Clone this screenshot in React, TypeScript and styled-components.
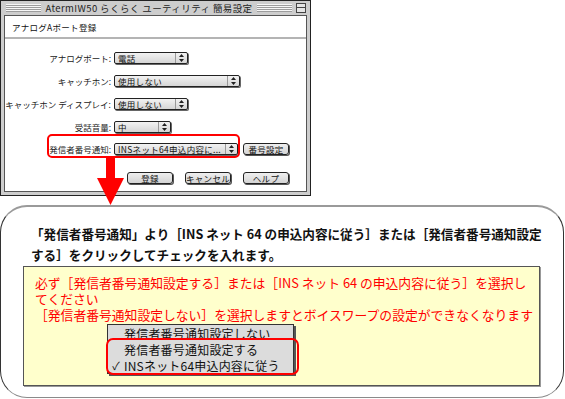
import styled, { createGlobalStyle } from "styled-components";

const GlobalStyle = createGlobalStyle`
  html, body {
    margin: 0;
    padding: 0;
    background: #fff;
  }

  body {
    width: 565px;
    height: 399px;
    overflow: hidden;
    font-family: "Noto Sans CJK JP", sans-serif;
    color: #111;
  }
`;

const Page = styled.div`
  width: 565px;
  height: 399px;
  display: flex;
  flex-direction: column;
`;

const Top = styled.div`
  position: relative;
  height: 205px;
`;

const Window = styled.div`
  width: 311px;
  height: 196px;
  box-sizing: border-box;
  border: 1px solid #222;
  background: #cdcdcd;
  padding: 0 3px 3px 3px;
  display: flex;
  flex-direction: column;
`;

const TitleBar = styled.div`
  height: 14px;
  display: flex;
  align-items: center;
  gap: 4px;
  padding: 0 1px 0 2px;
`;

const Stripes = styled.div`
  flex: 1;
  height: 8px;
  background: repeating-linear-gradient(
    to bottom,
    #f6f6f6 0 1px,
    #9c9c9c 1px 2px
  );
`;

const Title = styled.span`
  font-size: 9.5px;
  letter-spacing: 0.4px;
  white-space: nowrap;
  color: #222;
`;

const CollapseBox = styled.span`
  position: relative;
  width: 8px;
  height: 8px;
  border: 1px solid #444;
  background: #e4e4e4;

  &:after {
    content: "";
    position: absolute;
    left: 0;
    right: 0;
    top: 3px;
    height: 1px;
    background: #444;
  }
`;

const Content = styled.div`
  flex: 1;
  background: #fff;
  border: 1px solid #555;
  display: flex;
  flex-direction: column;
`;

const Header = styled.div`
  height: 21px;
  display: flex;
  align-items: center;
  padding-left: 7px;
  font-size: 8.5px;
  letter-spacing: 0.3px;
  border-bottom: 2px solid #b4b4b4;
`;

const Form = styled.div`
  display: flex;
  flex-direction: column;
  gap: 11px;
  padding-top: 13px;
`;

const Row = styled.div<{ $shift?: number }>`
  position: relative;
  height: 12px;
  display: flex;
  align-items: center;
  margin-top: ${(p) => p.$shift ?? 0}px;
`;

const Label = styled.div`
  width: 106px;
  flex: none;
  display: flex;
  justify-content: flex-end;
  white-space: nowrap;
  font-size: 8.5px;
  color: #222;
`;

const Select = styled.div<{ $w: number }>`
  width: ${(p) => p.$w}px;
  height: 12px;
  box-sizing: border-box;
  margin-left: 3px;
  border: 1px solid #222;
  border-radius: 2px;
  background: linear-gradient(#f2f2f2, #d6d6d6);
  box-shadow: 1px 1px 0 #666;
  display: flex;
  align-items: center;
`;

const SelectText = styled.span`
  flex: 1;
  padding-left: 3px;
  font-size: 8.5px;
  letter-spacing: 0.3px;
  white-space: nowrap;
  overflow: hidden;
`;

const SelectArrow = styled.span`
  width: 11px;
  height: 100%;
  border-left: 1px solid #999;
  display: flex;
  align-items: center;
  justify-content: center;
`;

const Highlight = styled.div`
  position: absolute;
  left: 42px;
  top: -9px;
  width: 193px;
  height: 24px;
  box-sizing: border-box;
  border: 2px solid #f00;
  border-radius: 5px;
`;

const Button = styled.div<{ $ml?: number }>`
  width: 46px;
  height: 12px;
  box-sizing: border-box;
  margin-left: ${(p) => p.$ml ?? 0}px;
  border: 1px solid #222;
  border-radius: 3px;
  background: linear-gradient(#efefef, #d4d4d4);
  box-shadow: 1px 1px 0 #555;
  display: flex;
  align-items: center;
  justify-content: center;
  font-size: 8.5px;
  letter-spacing: 0.3px;
  white-space: nowrap;
`;

const Buttons = styled.div`
  display: flex;
  gap: 12px;
  padding-left: 122px;
  margin-top: 17px;
`;

const Arrow = styled.svg`
  position: absolute;
  left: 97px;
  top: 157px;
`;

const Callout = styled.div`
  height: 193px;
  margin-right: 1px;
  box-sizing: border-box;
  border: 1px solid #333;
  border-top: 2px solid #9a9a9a;
  border-bottom-color: #8a8a8a;
  border-radius: 27px;
  padding: 16px 0 0 22px;
`;

const Lead = styled.p`
  margin: 0;
  padding-left: 8px;
  font-size: 12.6px;
  font-weight: 700;
  line-height: 21px;
  letter-spacing: 0;
  white-space: nowrap;
  color: #111;
`;

const Note = styled.div`
  margin-top: 1px;
  width: 517px;
  height: 120px;
  box-sizing: border-box;
  border: 1px solid #555;
  box-shadow: 1px 1px 0 #999;
  background: #ffffcc;
  padding: 8px 0 0 11px;
`;

const Warning = styled.p`
  margin: 0;
  font-size: 12.8px;
  line-height: 16px;
  white-space: nowrap;
  color: #f00;
`;

const Menu = styled.div`
  position: relative;
  margin: 1px 0 0 72px;
  width: 187px;
  box-sizing: border-box;
  border: 1px solid #333;
  background: #dcdcdc;
  box-shadow: 2px 2px 0 #555;
`;

const MenuItem = styled.div`
  height: 16px;
  display: flex;
  align-items: center;
  font-size: 12px;
  letter-spacing: 0.2px;
  white-space: nowrap;
  color: #111;
`;

const Check = styled.span`
  width: 16px;
  flex: none;
  text-align: center;
  font-size: 11px;
`;

const MenuHighlight = styled.div`
  position: absolute;
  left: -2px;
  top: 13px;
  width: 193px;
  height: 37px;
  box-sizing: border-box;
  border: 2px solid #f00;
  border-radius: 7px;
`;

function UpDown() {
  return (
    <svg width="5" height="8" viewBox="0 0 5 8">
      <path d="M2.5 0 L5 3 L0 3 Z M0 5 L5 5 L2.5 8 Z" fill="#222" />
    </svg>
  );
}

function PopUp({ w, value }: { w: number; value: string }) {
  return (
    <Select $w={w}>
      <SelectText>{value}</SelectText>
      <SelectArrow>
        <UpDown />
      </SelectArrow>
    </Select>
  );
}

export default function App() {
  return (
    <Page>
      <GlobalStyle />

      <Top>
        <Window>
          <TitleBar>
            <Stripes />
            <Title>AtermIW50 らくらく ユーティリティ 簡易設定</Title>
            <Stripes />
            <CollapseBox />
          </TitleBar>

          <Content>
            <Header>アナログAポート登録</Header>

            <Form>
              <Row>
                <Label>アナログポート:</Label>
                <PopUp w={74} value="電話" />
              </Row>
              <Row>
                <Label>キャッチホン:</Label>
                <PopUp w={126} value="使用しない" />
              </Row>
              <Row>
                <Label>キャッチホン ディスプレイ:</Label>
                <PopUp w={74} value="使用しない" />
              </Row>
              <Row>
                <Label>受話音量:</Label>
                <PopUp w={57} value="中" />
              </Row>
              <Row $shift={-1}>
                <Label>発信者番号通知:</Label>
                <PopUp w={124} value="INSネット64申込内容に..." />
                <Button $ml={5}>番号設定</Button>
                <Highlight />
              </Row>
            </Form>

            <Buttons>
              <Button>登録</Button>
              <Button>キャンセル</Button>
              <Button>ヘルプ</Button>
            </Buttons>
          </Content>
        </Window>

        <Arrow width="27" height="48" viewBox="0 0 27 48">
          <rect x="9" y="0" width="9" height="22" fill="#f00" />
          <polygon points="0,21 27,21 13.5,48" fill="#f00" />
        </Arrow>
      </Top>

      <Callout>
        <Lead>
          「発信者番号通知」より［INS ネット 64 の申込内容に従う］または［発信者番号通知設定
          <br />
          する］をクリックしてチェックを入れます。
        </Lead>

        <Note>
          <Warning>
            必ず［発信者番号通知設定する］または［INS ネット 64 の申込内容に従う］を選択し
            <br />
            てください
            <br />
            ［発信者番号通知設定しない］を選択しますとボイスワープの設定ができなくなります
          </Warning>

          <Menu>
            <MenuItem>
              <Check />
              発信者番号通知設定しない
            </MenuItem>
            <MenuItem>
              <Check />
              発信者番号通知設定する
            </MenuItem>
            <MenuItem>
              <Check>✓</Check>
              INSネット64申込内容に従う
            </MenuItem>
            <MenuHighlight />
          </Menu>
        </Note>
      </Callout>
    </Page>
  );
}
